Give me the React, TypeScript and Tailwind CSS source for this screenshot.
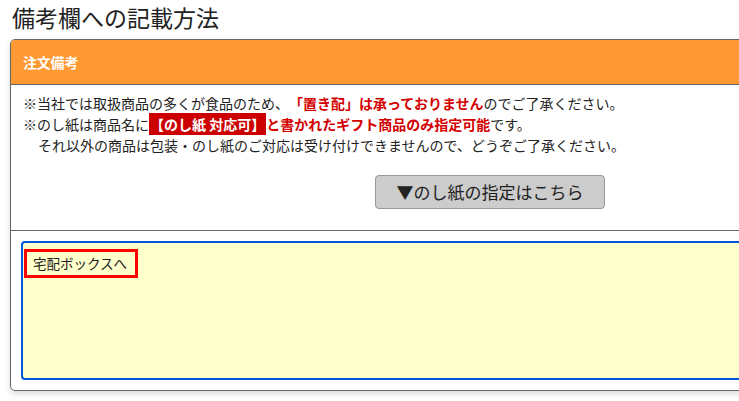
const FONT = "font-['Noto_Sans_CJK_JP','Noto_Sans',sans-serif]";

function NoteLines() {
  return (
    <div className="text-[14px] leading-[21px] text-[#222] pt-[8px] pl-[12px] [text-spacing-trim:space-all]">
      <p>
        ※当社では取扱商品の多くが食品のため、
        <span className="font-bold text-[#d40000]">「置き配」は承っておりません</span>
        のでご了承ください。
      </p>
      <p>
        ※のし紙は商品名に
        <span className="font-bold text-white bg-[#cc0000] px-[1px] py-[1px]">【のし紙 対応可】</span>
        <span className="font-bold text-[#d40000]">と書かれたギフト商品のみ指定可能</span>
        です。
      </p>
      <p className="pl-[15px]">
        それ以外の商品は包装・のし紙のご対応は受け付けできませんので、どうぞご了承ください。
      </p>
    </div>
  );
}

export default function App() {
  return (
    <div className={`w-[739px] h-[401px] overflow-hidden bg-white ${FONT}`}>
      <h1 className="text-[23px] leading-[34px] text-[#222] pl-[12px]">
        備考欄への記載方法
      </h1>

      <div className="ml-[10px] mt-[5px] w-[800px] border border-[#666] rounded-[5px] bg-white shadow-[0_3px_6px_rgba(0,0,0,0.15)]">
        {/* header */}
        <div className="h-[45px] bg-[#ff9933] rounded-t-[4px] border-b border-[#666] flex items-center px-[12px]">
          <span className="text-[14px] tracking-[-0.2px] font-bold text-white">注文備考</span>
        </div>

        {/* notice */}
        <div className="pb-[21px] border-b border-[#666]">
          <NoteLines />
          <button className="mt-[19px] ml-[364px] w-[230px] h-[34px] bg-[#cccccc] border border-[#999] rounded-[4px] text-[17px] text-[#222] flex items-center justify-center">
            ▼のし紙の指定はこちら
          </button>
        </div>

        {/* textarea */}
        <div className="pt-[10px] pb-[10px] pl-[10px]">
          <div className="h-[139px] border-2 border-[#0055dd] rounded-[4px] bg-[#ffffcc] pt-[6px] pl-[1px]">
            <span className="inline-block border-[3px] border-[#ff0000] pl-[6px] pr-[8px] h-[29px] leading-[22px] text-[13.5px] text-[#222]">
              宅配ボックスへ
            </span>
          </div>
        </div>
      </div>
    </div>
  );
}
